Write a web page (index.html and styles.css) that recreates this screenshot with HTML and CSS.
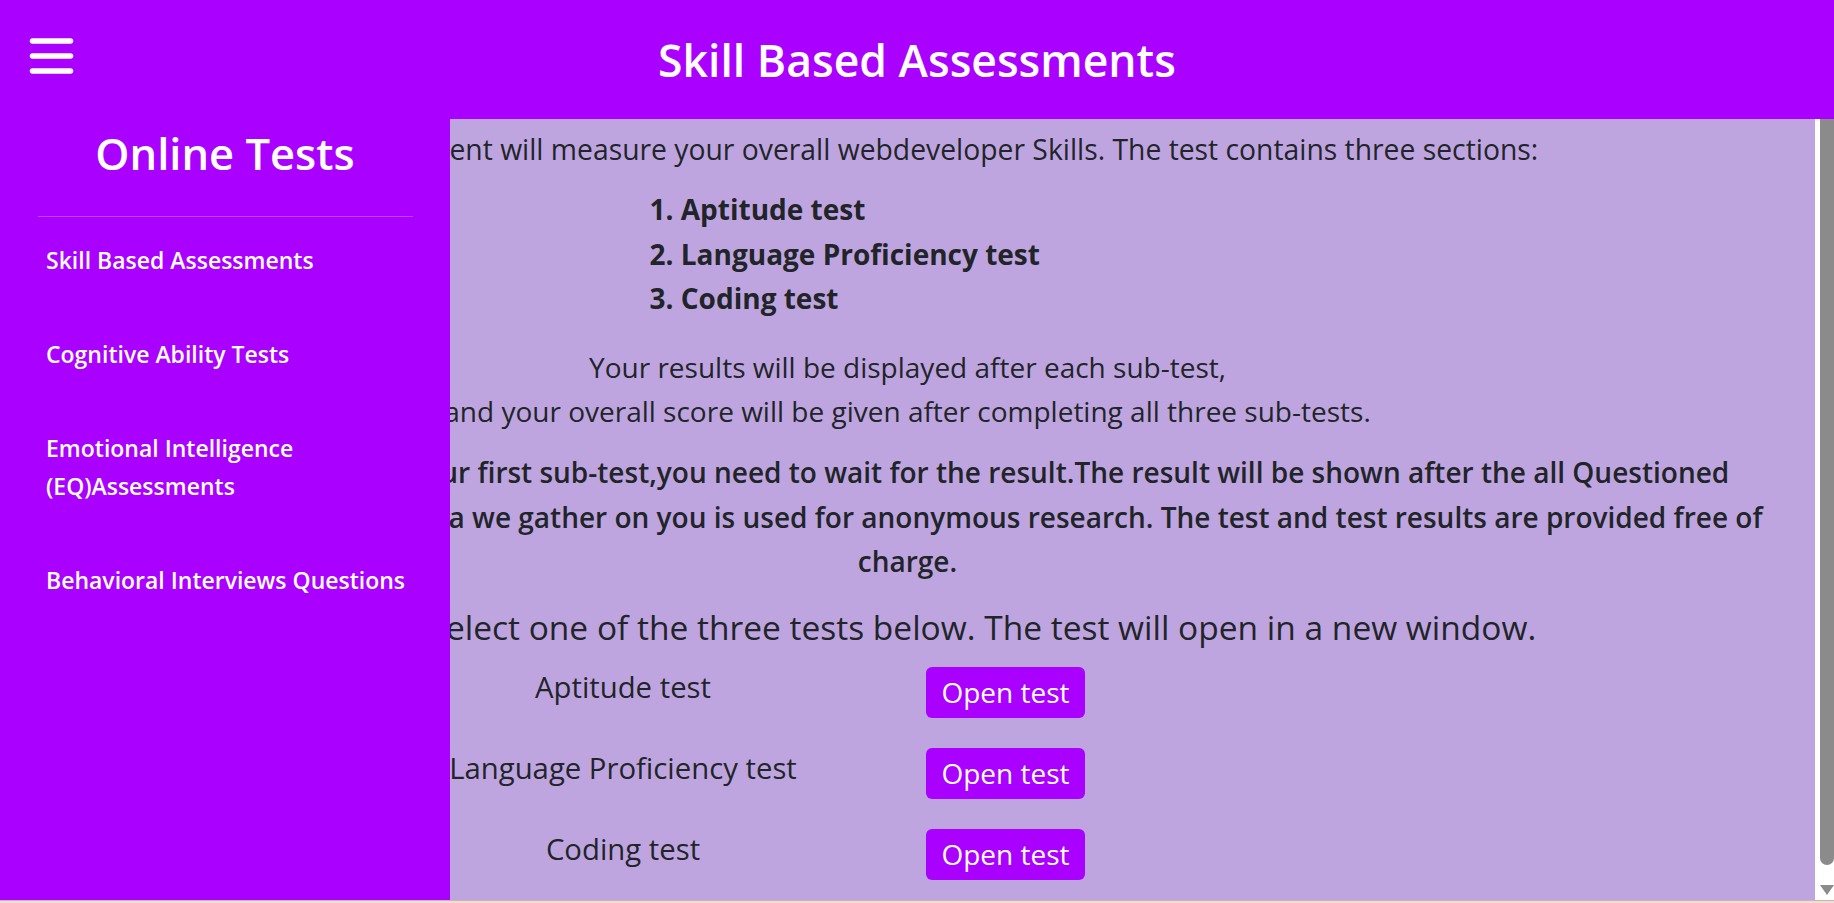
FILE: index.html
```html
<!DOCTYPE html>
<html lang="en">
<head>
<meta charset="utf-8">
<title>Skill Based Assessments</title>
<link rel="stylesheet" href="styles.css">
</head>
<body>
<header class="topbar">
  <button class="menu-btn" aria-label="Menu">
    <svg width="45" height="40" viewBox="0 0 45 40"><g stroke="#fff" stroke-width="5.5" stroke-linecap="round"><line x1="3.5" y1="5" x2="41.5" y2="5"/><line x1="3.5" y1="20" x2="41.5" y2="20"/><line x1="3.5" y1="35" x2="41.5" y2="35"/></g></svg>
  </button>
  <h1 class="page-title">Skill Based Assessments</h1>
</header>
<div class="app">
  <aside class="sidebar">
    <h2 class="side-title">Online Tests</h2>
    <hr class="side-rule">
    <nav class="side-nav">
      <a href="#">Skill Based Assessments</a>
      <a href="#">Cognitive Ability Tests</a>
      <a href="#">Emotional Intelligence (EQ)Assessments</a>
      <a href="#">Behavioral Interviews Questions</a>
    </nav>
  </aside>
  <main class="content">
    <p class="intro">This assessment will measure your overall webdeveloper Skills. The test contains three sections:</p>
    <ol class="sections">
      <li>Aptitude test</li>
      <li>Language Proficiency test</li>
      <li>Coding test</li>
    </ol>
    <p class="results">Your results will be displayed after each sub-test,<br>and your overall score will be given after completing all three sub-tests.</p>
    <p class="notice">Once you have finished your first sub-test,you need to wait for the result.The result will be shown after the all Questioned<br>have been answered. The data we gather on you is used for anonymous research. The test and test results are provided free of<br>charge.</p>
    <h3 class="choose">To begin, select one of the three tests below. The test will open in a new window.</h3>
    <div class="tests">
      <h4 class="test-name">Aptitude test</h4>
      <div><button class="open-btn">Open test</button></div>
      <h4 class="test-name">Language Proficiency test</h4>
      <div><button class="open-btn">Open test</button></div>
      <h4 class="test-name">Coding test</h4>
      <div><button class="open-btn">Open test</button></div>
    </div>
  </main>
  <div class="scrollbar" aria-hidden="true">
    <div class="scroll-thumb"></div>
    <svg class="scroll-arrow" width="14" height="11" viewBox="0 0 14 11"><polygon points="0,0 14,0 7,10" fill="#8b8b8b"/></svg>
  </div>
</div>
</body>
</html>
```
FILE: styles.css
```css
* { box-sizing: border-box; }
html, body { margin: 0; padding: 0; }
body {
  background: #f4dcd6;
  font-family: "Open Sans", "Noto Sans", sans-serif;
  color: #212529;
  height: 903px;
  overflow: hidden;
}
.topbar {
  height: 119px;
  background: #aa00ff;
  display: grid;
  grid-template-columns: 1fr auto 1fr;
  align-items: center;
}
.menu-btn {
  justify-self: start;
  margin: 0 0 8px 29px;
  padding: 0;
  border: 0;
  background: none;
  display: flex;
}
.page-title {
  margin: 0;
  color: #fff;
  font-size: 44.5px;
  font-weight: 600;
  line-height: 1.2;
}
.app {
  position: relative;
  height: 782px;
  display: flex;
  border-bottom: 1px solid #cbb3b0;
}
.sidebar {
  position: absolute;
  left: 0;
  top: 0;
  bottom: 0;
  width: 450px;
  background: #aa00ff;
  color: #fff;
  z-index: 2;
}
.side-title {
  margin: 7px 0 0;
  text-align: center;
  font-size: 43.5px;
  font-weight: 600;
  line-height: 56px;
}
.side-rule {
  margin: 34px 37px 0 38px;
  border: 0;
  border-top: 1px solid #fff;
  opacity: .25;
}
.side-nav { display: flex; flex-direction: column; }
.side-nav a {
  display: block;
  color: #fff;
  text-decoration: none;
  font-size: 23px;
  font-weight: 600;
  line-height: 38px;
  padding: 24px 30px 32px 46px;
}
.content {
  flex: 1;
  min-width: 0;
  overflow: hidden;
  background: #bfa5e0;
  text-align: center;
  padding: 8px 0 0;
}
.scrollbar {
  width: 19px;
  flex: none;
  background: #fff;
  display: flex;
  flex-direction: column;
  align-items: flex-end;
}
.scroll-thumb {
  width: 14px;
  height: 746px;
  background: #8b8b8b;
  border-radius: 0 0 7px 7px;
}
.scroll-arrow {
  margin-top: 20px;
}
.intro {
  margin: 0;
  font-size: 28.3px;
  line-height: 44px;
}
.sections {
  width: 516px;
  margin: 16px auto 0;
  padding: 0;
  text-align: left;
  list-style-position: inside;
  font-size: 28px;
  font-weight: 700;
  line-height: 44.5px;
}
.results {
  margin: 24.5px 0 0;
  font-size: 28px;
  line-height: 44px;
}
.notice {
  margin: 17px 0 0;
  font-size: 28px;
  font-weight: 600;
  line-height: 44.5px;
}
.choose {
  margin: 20.5px 0 0;
  font-size: 33.5px;
  font-weight: 500;
  line-height: 46px;
}
.tests {
  margin-top: 17px;
  display: grid;
  grid-template-columns: 606px auto;
  row-gap: 30px;
  padding-left: 320px;
  text-align: left;
}
.test-name {
  margin: 0;
  text-align: center;
  font-size: 29.3px;
  font-weight: 500;
  line-height: 40px;
}
.open-btn {
  display: block;
  height: 51px;
  width: 159px;
  padding: 0;
  border: 0;
  border-radius: 6px;
  background: #aa00ff;
  color: #fff;
  font-family: inherit;
  font-size: 28px;
  line-height: 51px;
}
```
